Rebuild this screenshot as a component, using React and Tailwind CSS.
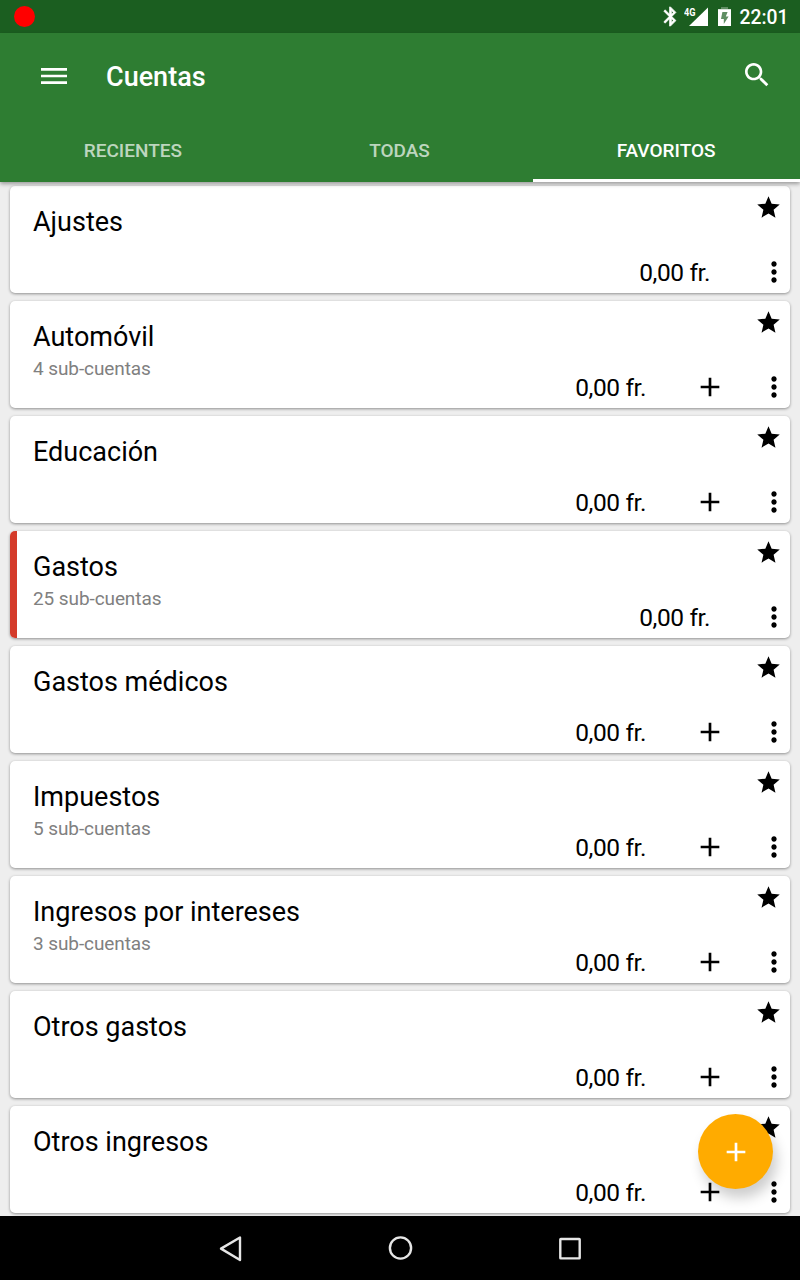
import React from 'react';

const accounts = [
  { name: 'Ajustes', placeholder: true },
  { name: 'Automóvil', sub: '4 sub-cuentas' },
  { name: 'Educación' },
  { name: 'Gastos', sub: '25 sub-cuentas', placeholder: true, accent: true },
  { name: 'Gastos médicos' },
  { name: 'Impuestos', sub: '5 sub-cuentas' },
  { name: 'Ingresos por intereses', sub: '3 sub-cuentas' },
  { name: 'Otros gastos' },
  { name: 'Otros ingresos' },
];

function Icon({ d, className }) {
  return (
    <svg viewBox="0 0 24 24" className={className} fill="currentColor">
      <path d={d} />
    </svg>
  );
}

const PLUS = 'M19 13h-6v6h-2v-6H5v-2h6V5h2v6h6z';
const MORE = 'M12 8c1.1 0 2-.9 2-2s-.9-2-2-2-2 .9-2 2 .9 2 2 2zm0 2c-1.1 0-2 .9-2 2s.9 2 2 2 2-.9 2-2-.9-2-2-2zm0 6c-1.1 0-2 .9-2 2s.9 2 2 2 2-.9 2-2-.9-2-2-2z';
const STAR = 'M12 17.27L18.18 21l-1.64-7.03L22 9.24l-7.19-.61L12 2 9.19 8.63 2 9.24l5.46 4.73L5.82 21z';
const SEARCH = 'M15.5 14h-.79l-.28-.27C15.41 12.59 16 11.11 16 9.5 16 5.91 13.09 3 9.5 3S3 5.91 3 9.5 5.91 16 9.5 16c1.61 0 3.09-.59 4.23-1.57l.27.28v.79l5 4.99L20.49 19l-4.99-5zm-6 0C7.01 14 5 11.99 5 9.5S7.01 5 9.5 5 14 7.01 14 9.5 11.99 14 9.5 14z';
const BLUETOOTH = 'M17.71 7.71L12 2h-1v7.59L6.41 5 5 6.41 10.59 12 5 17.59 6.41 19 11 14.41V22h1l5.71-5.71-4.3-4.29 4.3-4.29zM13 5.83l1.88 1.88L13 9.59V5.83zm1.88 10.46L13 18.17v-3.76l1.88 1.88z';

function StatusBar() {
  return (
    <div className="flex h-[33px] shrink-0 items-center bg-[#1b5e20] pl-[13.5px] pr-[11.5px] text-white">
      <div className="size-[21px] rounded-full bg-[#ff0000]" />
      <div className="ml-auto flex items-center">
        <svg viewBox="0 0 24 24" className="mr-[2px] size-[23px]" fill="currentColor" stroke="currentColor" strokeWidth=".7">
          <path d={BLUETOOTH} />
        </svg>
        <svg viewBox="0 0 24 20" className="mr-[10px] h-5 w-6" fill="currentColor">
          <path d="M24 .5V19H5z" />
          <text x="0" y="8.8" fontSize="10.5" fontWeight="700" textLength="11.5" lengthAdjust="spacingAndGlyphs" fontFamily="Roboto, sans-serif">4G</text>
        </svg>
        <svg viewBox="0 0 13 19" className="mr-[9px] h-[19px] w-[13px]">
          <path d="M3 0h7v2h3v17H0V2h3z" fill="#fff" fillOpacity=".3" />
          <path fillRule="evenodd" d="M0 2.2h13V19H0zM4.4 5L3 12h2.8v5L10.6 9.6H7.8L9.6 5z" fill="#fff" />
        </svg>
        <span className="pt-[2px] text-[19.3px] font-medium leading-[22px]">22:01</span>
      </div>
    </div>
  );
}

function Header() {
  return (
    <header className="relative z-10 h-[149px] shrink-0 bg-[#2e7d32] text-white shadow-[0_2px_4px_rgba(0,0,0,0.35)]">
      <div className="flex h-[85px] items-center pl-[41px] pr-[27px]">
        <svg viewBox="0 0 26 18" className="h-[18px] w-[26px]" stroke="currentColor" strokeWidth="2.67">
          <path d="M0 2.3h26M0 9h26M0 15.6h26" />
        </svg>
        <h1 className="ml-[39px] pt-[2px] text-[27px] font-medium leading-8">Cuentas</h1>
        <Icon d={SEARCH} className="mb-[1px] ml-auto size-8" />
      </div>
      <nav className="grid h-16 grid-cols-3 text-center text-[19px] font-medium leading-[65px]">
        <span className="pr-px text-white/70">RECIENTES</span>
        <span className="pr-px text-white/70">TODAS</span>
        <span className="h-16 border-b-[3px] border-white pr-px">FAVORITOS</span>
      </nav>
    </header>
  );
}

function AccountCard({ name, sub, placeholder, accent }) {
  return (
    <li className="flex h-[107px] shrink-0 overflow-hidden rounded-[5px] bg-white shadow-[0_1px_3px_rgba(0,0,0,0.4)]">
      <div className={accent ? 'w-[7px] bg-[#d43b2a]' : 'w-[7px]'} />
      <div className="flex-1 pl-4 pt-5">
        <div className="text-[27px] leading-8">{name}</div>
        {sub && <div className="mt-[5px] text-[19px] leading-[22px] tracking-[-0.09px] text-[#808080]">{sub}</div>}
      </div>
      <div className="flex flex-col items-end justify-between pb-[5px] pt-[8px]">
        <Icon d={STAR} className="mr-[8px] size-[27px]" />
        <div className="flex h-8 items-center">
          <span className="mr-[48px] pt-[2px] text-[24.5px] leading-7 tracking-[-0.4px]">0,00 fr.</span>
          {!placeholder && <Icon d={PLUS} className="mr-8 size-8" />}
          <Icon d={MORE} className="size-8" />
        </div>
      </div>
    </li>
  );
}

export default function App() {
  return (
    <div className="relative flex h-[1280px] w-[800px] flex-col overflow-hidden bg-[#eeeeee] font-['Roboto',sans-serif] text-black">
      <StatusBar />
      <Header />
      <ul className="flex h-[1034px] shrink-0 flex-col gap-2 overflow-hidden px-[10px] pt-1">
        {accounts.map((a) => <AccountCard key={a.name} {...a} />)}
      </ul>
      <button className="absolute left-[698px] top-[1114px] flex size-[75px] items-center justify-center rounded-full bg-[#ffab00] text-white shadow-[4px_9px_13px_rgba(0,0,0,0.2)]">
        <Icon d={PLUS} className="size-8" />
      </button>
      <footer className="relative flex h-16 shrink-0 items-center justify-center bg-black">
        <svg viewBox="0 0 400 64" className="h-16 w-[400px]" fill="none" stroke="#e6e6e6" strokeWidth="2.4" strokeLinejoin="round">
          <path d="M40 21.5v22.5L21 32.6z" />
          <circle cx="200.5" cy="32" r="10.6" />
          <rect x="360.3" y="23" width="19.4" height="19.4" rx=".5" />
        </svg>
      </footer>
    </div>
  );
}
